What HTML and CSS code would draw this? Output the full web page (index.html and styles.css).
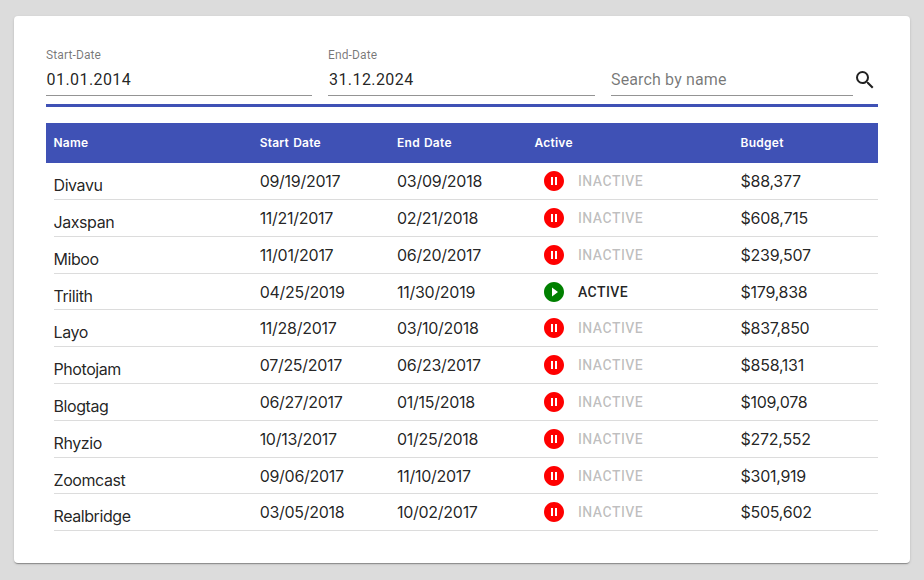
FILE: index.html
```
<!DOCTYPE html>
<html lang="en">
<head>
<meta charset="utf-8">
<title>Campaigns</title>
<link rel="stylesheet" href="styles.css">
</head>
<body>
<svg width="0" height="0" class="defs" aria-hidden="true">
  <symbol id="pause" viewBox="0 0 24 24"><path fill="red" d="M12 2C6.48 2 2 6.48 2 12s4.48 10 10 10 10-4.480 10-10S17.520 2 12 2zm-1 14H9V8h2v8zm4 0h-2V8h2v8z"/></symbol>
  <symbol id="play" viewBox="0 0 24 24"><path fill="green" d="M12 2C6.480 2 2 6.480 2 12s4.480 10 10 10 10-4.480 10-10S17.520 2 12 2zm-2 14.500v-9l6 4.500-6 4.500z"/></symbol>
</svg>
<main class="card">
  <form class="filters">
    <label class="field"><span class="label">Start-Date</span><span class="value">01.01.2014</span></label>
    <label class="field end"><span class="label">End-Date</span><span class="value">31.12.2024</span></label>
    <div class="search">
      <div class="field"><span class="value placeholder">Search by name</span></div>
      <svg class="magnifier" viewBox="0 0 24 24"><path d="M15.500 14h-.79l-.28-.27A6.471 6.471 0 0 0 16 9.500 6.500 6.500 0 1 0 9.500 16c1.610 0 3.090-.59 4.230-1.570l.27.28v.79l5 4.990L20.490 19l-4.990-5zm-6 0C7.010 14 5 11.990 5 9.500S7.010 5 9.500 5 14 7.010 14 9.500 11.990 14 9.500 14z"/></svg>
    </div>
  </form>
  <section class="table">
    <div class="cols head"><span>Name</span><span>Start Date</span><span>End Date</span><span>Active</span><span>Budget</span></div>
    <div class="cols row"><span class="name">Divavu</span><span>09/19/2017</span><span>03/09/2018</span><span class="status"><svg class="icon"><use href="#pause"/></svg>INACTIVE</span><span>$88,377</span></div>
    <div class="cols row"><span class="name">Jaxspan</span><span>11/21/2017</span><span>02/21/2018</span><span class="status"><svg class="icon"><use href="#pause"/></svg>INACTIVE</span><span>$608,715</span></div>
    <div class="cols row"><span class="name">Miboo</span><span>11/01/2017</span><span>06/20/2017</span><span class="status"><svg class="icon"><use href="#pause"/></svg>INACTIVE</span><span>$239,507</span></div>
    <div class="cols row"><span class="name">Trilith</span><span>04/25/2019</span><span>11/30/2019</span><span class="status on"><svg class="icon"><use href="#play"/></svg>ACTIVE</span><span>$179,838</span></div>
    <div class="cols row"><span class="name">Layo</span><span>11/28/2017</span><span>03/10/2018</span><span class="status"><svg class="icon"><use href="#pause"/></svg>INACTIVE</span><span>$837,850</span></div>
    <div class="cols row"><span class="name">Photojam</span><span>07/25/2017</span><span>06/23/2017</span><span class="status"><svg class="icon"><use href="#pause"/></svg>INACTIVE</span><span>$858,131</span></div>
    <div class="cols row"><span class="name">Blogtag</span><span>06/27/2017</span><span>01/15/2018</span><span class="status"><svg class="icon"><use href="#pause"/></svg>INACTIVE</span><span>$109,078</span></div>
    <div class="cols row"><span class="name">Rhyzio</span><span>10/13/2017</span><span>01/25/2018</span><span class="status"><svg class="icon"><use href="#pause"/></svg>INACTIVE</span><span>$272,552</span></div>
    <div class="cols row"><span class="name">Zoomcast</span><span>09/06/2017</span><span>11/10/2017</span><span class="status"><svg class="icon"><use href="#pause"/></svg>INACTIVE</span><span>$301,919</span></div>
    <div class="cols row"><span class="name">Realbridge</span><span>03/05/2018</span><span>10/02/2017</span><span class="status"><svg class="icon"><use href="#pause"/></svg>INACTIVE</span><span>$505,602</span></div>
  </section>
</main>
</body>
</html>
```
FILE: styles.css
```
* { box-sizing: border-box; }
body {
  margin: 0;
  padding: 16px 14px 0;
  height: 580px;
  background: #dcdcdc;
  color: rgba(0, 0, 0, .87);
  font: 16px/20px Inter, sans-serif;
}
.defs { display: none; }
.card {
  height: 547px;
  padding: 32px;
  background: #fff;
  border-radius: 4px;
  box-shadow: 0 2px 1px -1px rgba(0, 0, 0, .2), 0 1px 1px rgba(0, 0, 0, .14), 0 1px 3px rgba(0, 0, 0, .12);
}
.filters {
  display: grid;
  grid-template-columns: 266px 267px 267px;
  gap: 16px;
  height: 59px;
  padding-bottom: 8px;
  border-bottom: 3px solid #3f51b5;
  font-family: Roboto, sans-serif;
}
.field {
  display: flex;
  flex-direction: column;
  height: 48px;
  border-bottom: 1px solid #949494;
}
.label {
  height: 15px;
  font-size: 12px;
  line-height: 15px;
  letter-spacing: .12px;
  color: rgba(0, 0, 0, .54);
}
.value {
  margin-top: 7px;
  padding-left: .6px;
  line-height: 19px;
  letter-spacing: .42px;
}
.end .value { padding-left: 1px; }
.placeholder {
  margin-top: 22px;
  padding-left: 0;
  color: rgba(0, 0, 0, .54);
  letter-spacing: .14px;
}
.search { display: grid; grid-template-columns: 242px 24px; }
.magnifier { width: 24px; height: 24px; margin-top: 20px; fill: rgba(0, 0, 0, .87); }
.table { margin-top: 16px; }
.cols {
  display: grid;
  grid-template-columns: 1.5fr 1fr 1fr 1.5fr 1fr;
  align-items: center;
}
.head {
  height: 40.250px;
  padding-left: 7.500px;
  background: #3f51b5;
  color: #fff;
  font-size: 12px;
  font-weight: 600;
  letter-spacing: .25px;
  word-spacing: .8px;
}
.row {
  height: 36.800px;
  margin-left: 7.500px;
  border-bottom: 1px solid #dcdcdc;
  letter-spacing: -.28px;
}
.name { padding-top: 8px; letter-spacing: -.42px; }
.status {
  display: flex;
  align-items: center;
  padding-left: 7.500px;
  color: rgba(0, 0, 0, .26);
  font: 500 14px/20px Roboto, sans-serif;
  letter-spacing: .45px;
}
.on { color: rgba(0, 0, 0, .87); }
.icon { width: 24px; height: 24px; margin-right: 12px; }
```
